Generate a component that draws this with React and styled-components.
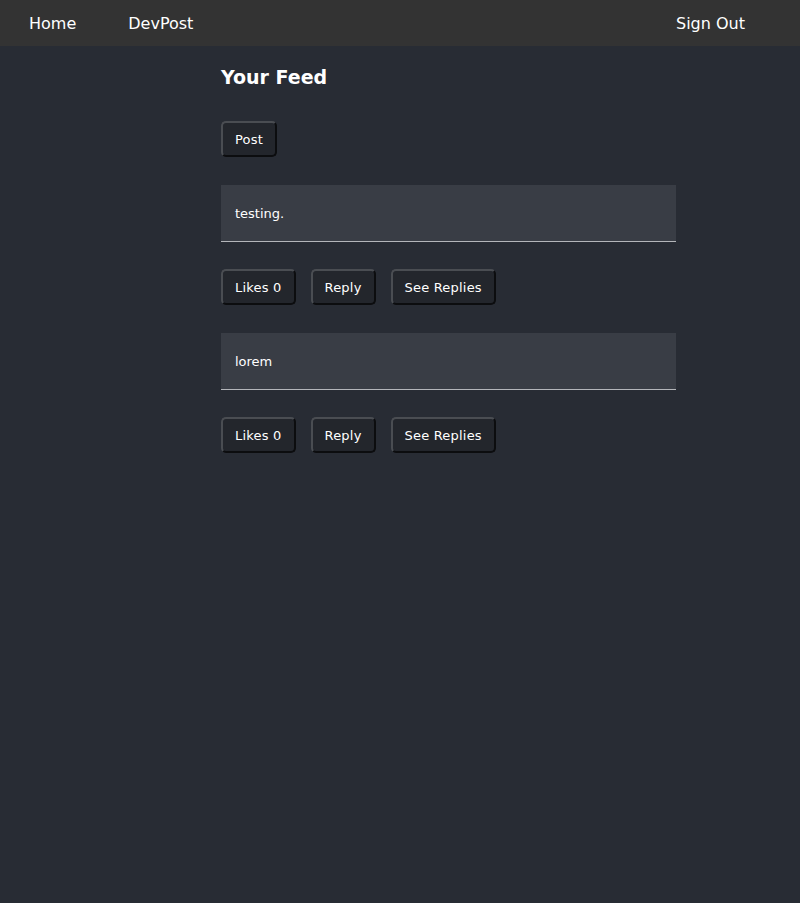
import React from 'react'
import styled, { createGlobalStyle } from 'styled-components'

const GlobalStyle = createGlobalStyle`
  html, body {
    margin: 0;
    padding: 0;
    background: #282c34;
    font-family: "DejaVu Sans", Verdana, sans-serif;
    color: #fff;
  }
`

const Page = styled.div`
  min-height: 903px;
  background: #282c34;
`

const Nav = styled.nav`
  display: flex;
  align-items: center;
  height: 46px;
  background: #333333;
  padding: 0 55px 0 29px;
`

const NavLink = styled.a`
  color: #fff;
  font-size: 16px;
  text-decoration: none;
  margin-right: ${props => props.gap || 0}px;
  margin-left: ${props => (props.right ? 'auto' : '0')};
`

const Feed = styled.main`
  width: 455px;
  margin-left: 221px;
  padding-top: 20px;
`

const Title = styled.h2`
  margin: 0 0 33px;
  font-size: 19px;
  font-weight: bold;
  line-height: 22px;
`

const Button = styled.button`
  height: 36px;
  padding: 0 12px;
  background: #23262c;
  color: #fff;
  font-family: "DejaVu Sans", Verdana, sans-serif;
  font-size: 13px;
  letter-spacing: 0.2px;
  border: 2px solid;
  border-color: #4a4d52 #0c0d0f #0c0d0f #4a4d52;
  border-radius: 5px;
`

const Card = styled.div`
  margin-top: 28px;
  height: 56px;
  display: flex;
  align-items: center;
  padding: 0 14px;
  background: #393d45;
  border-bottom: 1px solid #b4b6ba;
  font-size: 13px;
`

const Actions = styled.div`
  display: flex;
  gap: 15px;
  margin-top: 27px;
`

const posts = [
  { id: 1, text: 'testing.', likes: 0 },
  { id: 2, text: 'lorem', likes: 0 },
]

export default function App() {
  return (
    <Page>
      <GlobalStyle />
      <Nav>
        <NavLink href="#" gap={52}>Home</NavLink>
        <NavLink href="#">DevPost</NavLink>
        <NavLink href="#" right>Sign Out</NavLink>
      </Nav>
      <Feed>
        <Title>Your Feed</Title>
        <Button>Post</Button>
        {posts.map(post => (
          <React.Fragment key={post.id}>
            <Card>{post.text}</Card>
            <Actions>
              <Button>Likes {post.likes}</Button>
              <Button>Reply</Button>
              <Button>See Replies</Button>
            </Actions>
          </React.Fragment>
        ))}
      </Feed>
    </Page>
  )
}
